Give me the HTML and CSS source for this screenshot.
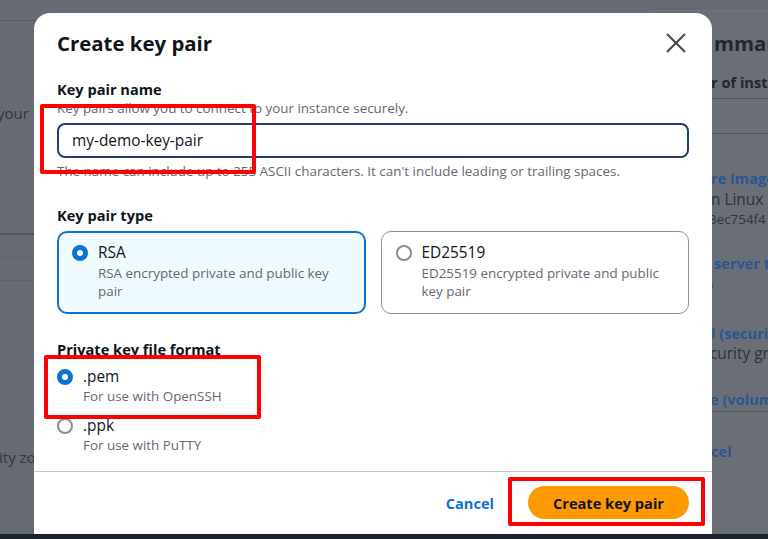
FILE: index.html
```html
<!DOCTYPE html>
<html lang="en">
<head>
<meta charset="utf-8">
<title>Create key pair</title>
<link rel="stylesheet" href="styles.css">
</head>
<body>
<div class="page">
  <div class="backdrop">
    <div class="main-bg">
      <div class="bg-header"></div>
      <div class="bg-text bg-your">your instance</div>
      <div class="bg-rule bg-rule-dark bg-rule-1"></div>
      <div class="bg-rule bg-rule-2"></div>
      <div class="bg-rule bg-rule-3"></div>
      <div class="bg-text bg-zone">ity zone</div>
    </div>
    <div class="summary-bg">
      <div class="s-title">mmary</div>
      <div class="s-strong s-count">r of instances</div>
      <div class="s-rule s-rule-1"></div>
      <div class="s-rule s-rule-2"></div>
      <div class="s-link s-ami">re Image</div>
      <div class="s-text s-linux">n Linux 2023</div>
      <div class="s-small">3ec754f4</div>
      <div class="s-link s-server">server type</div>
      <div class="s-text s-micro">o</div>
      <div class="s-link s-sec">l (security group)</div>
      <div class="s-text s-secgrp">curity group</div>
      <div class="s-link s-vol">e (volumes)</div>
      <div class="s-rule s-rule-3"></div>
      <div class="s-link s-cancel">cel</div>
    </div>
  </div>
  <div class="taskbar"></div>

  <div class="modal" role="dialog" aria-labelledby="modal-title">
    <div class="modal-header">
      <h2 id="modal-title" class="modal-title">Create key pair</h2>
      <button class="close-btn" aria-label="Close">
        <svg width="20" height="20" viewBox="0 0 20 20" aria-hidden="true">
          <path d="M1.5 1.5 L18.5 18.5 M18.5 1.5 L1.5 18.5" stroke="#414750" stroke-width="2" fill="none" stroke-linecap="round"/>
        </svg>
      </button>
    </div>

    <div class="modal-body">
      <section class="field field-name">
        <div class="field-label">Key pair name</div>
        <div class="field-desc">Key pairs allow you to connect to your instance securely.</div>
        <div class="input">my-demo-key-pair</div>
        <div class="field-hint">The name can include up to 255 ASCII characters. It can't include leading or trailing spaces.</div>
      </section>

      <section class="field field-type">
        <div class="field-label">Key pair type</div>
        <div class="tiles">
          <div class="tile tile-selected">
            <span class="radio radio-on"></span>
            <div class="tile-text">
              <div class="tile-label">RSA</div>
              <div class="tile-desc">RSA encrypted private and public key pair</div>
            </div>
          </div>
          <div class="tile">
            <span class="radio"></span>
            <div class="tile-text">
              <div class="tile-label">ED25519</div>
              <div class="tile-desc">ED25519 encrypted private and public key pair</div>
            </div>
          </div>
        </div>
      </section>

      <section class="field field-format">
        <div class="field-label">Private key file format</div>
        <div class="radio-group">
          <div class="radio-item">
            <span class="radio radio-on"></span>
            <div>
              <div class="radio-label">.pem</div>
              <div class="radio-desc">For use with OpenSSH</div>
            </div>
          </div>
          <div class="radio-item">
            <span class="radio"></span>
            <div>
              <div class="radio-label">.ppk</div>
              <div class="radio-desc">For use with PuTTY</div>
            </div>
          </div>
        </div>
      </section>
    </div>

    <div class="modal-footer">
      <button class="btn-link">Cancel</button>
      <button class="btn-primary">Create key pair</button>
    </div>
  </div>

  <div class="mark mark-name"></div>
  <div class="mark mark-format"></div>
  <div class="mark mark-submit"></div>
</div>
</body>
</html>
```

FILE: styles.css
```css
* { box-sizing: border-box; }

html, body {
  margin: 0;
  padding: 0;
}

body {
  width: 768px;
  height: 539px;
  overflow: hidden;
  background: #666a72;
  font-family: "Open Sans", "Noto Sans", "Liberation Sans", sans-serif;
  color: #0f141a;
}

.page {
  position: relative;
  width: 768px;
  height: 539px;
  overflow: hidden;
}

/* ---------- dimmed console behind the dialog ---------- */
.backdrop {
  display: flex;
  height: 534px;
}

.main-bg {
  flex: 0 0 640px;
  overflow: hidden;
}

.bg-header {
  height: 21px;
  border-bottom: 1px solid #5a5e66;
}

.bg-text {
  font-size: 15px;
  line-height: 20px;
  color: #33373e;
  white-space: nowrap;
}

.bg-your { margin-top: 82px; margin-left: -3px; }
.bg-zone { margin-top: 166px; margin-left: -1px; }

.bg-rule { height: 1px; background: #5d6169; }
.bg-rule-dark { height: 2px; background: #4f535b; }
.bg-rule-1 { margin-top: 110px; }
.bg-rule-2 { margin-top: 22px; }
.bg-rule-3 { margin-top: 22px; }

.summary-bg {
  flex: 1;
  margin-top: 10px;
  padding-left: 71px;
  background: #6a6e77;
  border-top-left-radius: 16px;
  border-top: 1px solid #70747c;
  overflow: hidden;
  white-space: nowrap;
  color: #2b2f36;
}

.s-title {
  margin-top: 18px;
  margin-left: 3px;
  font-size: 20.4px;
  line-height: 28px;
  font-weight: 700;
  color: #22262d;
}

.s-strong {
  font-size: 14.6px;
  line-height: 20px;
  font-weight: 700;
  color: #22262d;
}
.s-count { margin-top: 15px; }

.s-rule { height: 1px; background: #50545c; margin-left: -71px; }
.s-rule-1 { margin-top: 6px; }
.s-rule-2 { margin-top: 34px; }
.s-rule-3 { margin-top: 2px; }

.s-link {
  font-size: 14.6px;
  line-height: 20px;
  font-weight: 700;
  color: #2c5690;
}
.s-text {
  font-size: 15.4px;
  line-height: 20px;
  color: #2e3239;
}
.s-small {
  font-size: 13.4px;
  line-height: 18px;
  color: #32363d;
  margin-left: -2px;
}

.s-ami { margin-top: 34px; }
.s-linux { margin-top: 2px; }
.s-server { margin-top: 25px; margin-left: 3px; }
.s-micro { margin-top: 3px; margin-left: -7px; }
.s-sec { margin-top: 27px; }
.s-secgrp { margin-top: 1px; margin-left: -1px; }
.s-vol { margin-top: 25px; margin-left: -1px; }
.s-cancel { margin-top: 29px; }

.taskbar {
  height: 5px;
  background: #1b222b;
}

/* ---------- dialog ---------- */
.modal {
  position: absolute;
  left: 34px;
  top: 13px;
  width: 678px;
  height: 521px;
  background: #ffffff;
  border-radius: 16px 16px 0 0;
  display: flex;
  flex-direction: column;
}

.modal-header {
  display: flex;
  justify-content: space-between;
  align-items: center;
  padding: 16px 26px 0 23px;
}

.modal-title {
  margin: 0;
  font-size: 20.4px;
  line-height: 28px;
  font-weight: 700;
  color: #0f141a;
}

.close-btn {
  width: 20px;
  height: 20px;
  padding: 0;
  border: 0;
  background: none;
  display: flex;
}

.modal-body {
  padding: 0 23px;
  display: flex;
  flex-direction: column;
}

.field-name { margin-top: 22px; }
.field-type { margin-top: 25px; }
.field-format { margin-top: 25px; }

.field-label {
  font-size: 14.6px;
  line-height: 20px;
  font-weight: 700;
  color: #0f141a;
}

.field-desc,
.field-hint {
  font-size: 13.4px;
  line-height: 18px;
  color: #656871;
}

.field-hint { margin-top: 4px; }

.input {
  margin-top: 6px;
  height: 35px;
  border: 2px solid #1f3f6e;
  border-radius: 8px;
  padding: 0 13px;
  display: flex;
  align-items: center;
  font-size: 15.4px;
  color: #0f141a;
}

.tiles {
  margin-top: 6px;
  display: grid;
  grid-template-columns: 1fr 1fr;
  gap: 15px;
}

.tile {
  display: flex;
  gap: 10px;
  height: 83px;
  padding: 11px 14px 13px 14px;
  border: 1px solid #8d9199;
  border-radius: 10px;
  background: #ffffff;
}

.tile-selected {
  padding: 10px 13px 12px 13px;
  border: 2px solid #0972d3;
  background: #f0fbff;
}

.radio {
  flex: 0 0 16px;
  width: 16px;
  height: 16px;
  margin-top: 2px;
  border-radius: 50%;
  border: 2px solid #8c8c94;
  background: #ffffff;
}

.radio-on {
  border: 5px solid #0972d3;
  background: #ffffff;
}

.tile-label,
.radio-label {
  font-size: 15.4px;
  line-height: 20px;
  color: #0f141a;
}

.tile-desc {
  font-size: 13.4px;
  line-height: 18px;
  color: #656871;
  margin-top: 1px;
}

.radio-group {
  margin-top: 8px;
  display: flex;
  flex-direction: column;
  gap: 11px;
}

.radio-item {
  display: flex;
  gap: 10px;
}

.radio-desc {
  font-size: 13.4px;
  line-height: 18px;
  color: #656871;
}

.modal-footer {
  margin-top: auto;
  border-top: 1px solid #c6c6cd;
  padding: 14px 23px 15px;
  display: flex;
  justify-content: flex-end;
  align-items: center;
  gap: 34px;
}

.btn-link {
  border: 0;
  background: none;
  padding: 0;
  font-family: inherit;
  font-size: 14.6px;
  line-height: 20px;
  font-weight: 700;
  color: #0972d3;
}

.btn-primary {
  height: 33px;
  padding: 0 25px;
  border: 0;
  border-radius: 20px;
  background: #ff9900;
  font-family: inherit;
  font-size: 14.6px;
  font-weight: 700;
  color: #0f141a;
}

/* ---------- red annotation boxes ---------- */
.mark {
  position: absolute;
  border: 4px solid #ff0000;
  border-radius: 2px;
}

.mark-name { left: 40px; top: 104px; width: 216px; height: 70px; }
.mark-format { left: 44px; top: 355px; width: 217px; height: 64px; }
.mark-submit { left: 508px; top: 477px; width: 197px; height: 49px; }
```
